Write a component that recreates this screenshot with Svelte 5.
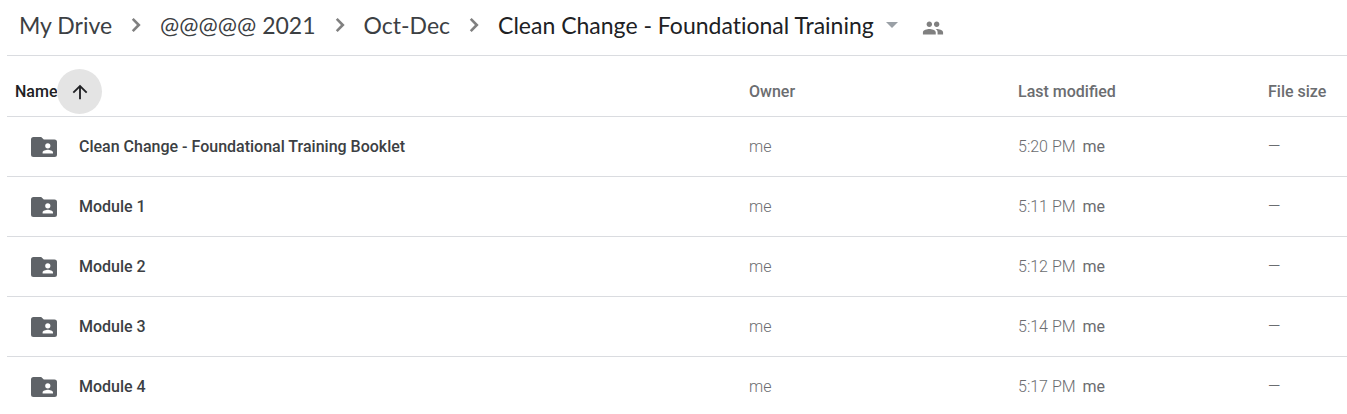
<script>
  const crumbs = ['My Drive', '@@@@@ 2021', 'Oct-Dec'];
  const rows = [
    { name: 'Clean Change - Foundational Training Booklet', time: '5:20 PM' },
    { name: 'Module 1', time: '5:11 PM' },
    { name: 'Module 2', time: '5:12 PM' },
    { name: 'Module 3', time: '5:14 PM' },
    { name: 'Module 4', time: '5:17 PM' }
  ];
</script>

<main>
  <nav aria-label="Breadcrumb">
    {#each crumbs as crumb}
      <a href="#folder">{crumb}</a>
      <svg class="chevron" viewBox="0 0 24 24" aria-hidden="true"><path d="M10 6 8.4 7.6 12.8 12l-4.4 4.4L10 18l6-6z" /></svg>
    {/each}
    <button class="current">
      Clean Change - Foundational Training
      <svg class="caret" viewBox="0 0 12 6" aria-hidden="true"><path d="M0 0h12L6 6z" /></svg>
    </button>
    <button class="share" aria-label="Manage people">
      <svg viewBox="0 0 24 24" aria-hidden="true"><path d="M16 11c1.66 0 2.99-1.34 2.99-3S17.66 5 16 5s-3 1.34-3 3 1.34 3 3 3zm-8 0c1.66 0 2.99-1.34 2.99-3S9.66 5 8 5 5 6.34 5 8s1.34 3 3 3zm0 2c-2.33 0-7 1.17-7 3.5V19h14v-2.5c0-2.33-4.67-3.5-7-3.5zm8 0c-.29 0-.62.02-.97.05 1.16.84 1.97 1.97 1.97 3.45V19h6v-2.5c0-2.33-4.67-3.5-7-3.5z" /></svg>
    </button>
  </nav>

  <table>
    <colgroup><col /><col class="c-owner" /><col class="c-modified" /><col class="c-size" /></colgroup>
    <thead>
      <tr>
        <th>
          <div class="sort">
            Name
            <button aria-label="Reverse sort direction">
              <svg viewBox="0 0 24 24" aria-hidden="true"><path d="m4 12 1.41 1.41L11 7.83V20h2V7.83l5.58 5.59L20 12l-8-8z" /></svg>
            </button>
          </div>
        </th>
        <th>Owner</th>
        <th>Last modified</th>
        <th>File size</th>
      </tr>
    </thead>
    <tbody>
      {#each rows as row}
        <tr>
          <td>
            <div class="item">
              <svg viewBox="0 0 26 20" aria-hidden="true"><path fill-rule="evenodd" d="M2.5 0h7.7l2.6 2.4h10.7A2.5 2.5 0 0 1 26 4.900v12.600a2.500 2.500 0 0 1-2.500 2.500h-21A2.500 2.500 0 0 1 0 17.500v-15A2.500 2.500 0 0 1 2.500 0zM16.800 6.200a2.600 2.600 0 1 0 0 5.200 2.600 2.600 0 0 0 0-5.200zM11.600 16.600H22v-1.200c0-1.800-3.400-2.700-5.200-2.700s-5.200.9-5.200 2.700z" /></svg>
              <span>{row.name}</span>
            </div>
          </td>
          <td>me</td>
          <td>{row.time} <span class="by">me</span></td>
          <td>—</td>
        </tr>
      {/each}
    </tbody>
  </table>
</main>

<style>
  :global(body) {
    background: #fff;
    overflow: hidden;
  }
  main {
    padding-left: 7px;
    font-family: Roboto, sans-serif;
    color: #6b6d70;
  }
  nav {
    display: flex;
    align-items: center;
    height: 56px;
    padding: 0 12px 5px;
    box-sizing: border-box;
    border-bottom: 1px solid #dadce0;
    color: #3c4043;
    font-family: Lato, Roboto, sans-serif;
    font-size: 23px;
    font-variant-ligatures: none;
    line-height: 32px;
    white-space: nowrap;
  }
  a {
    color: inherit;
    text-decoration: none;
  }
  button {
    border: 0;
    padding: 0;
    background: none;
    color: inherit;
    font: inherit;
    cursor: pointer;
  }
  svg {
    display: block;
    flex: none;
    fill: currentColor;
  }
  .chevron {
    width: 28px;
    height: 28px;
    margin: 0 10px;
    color: #808080;
  }
  .current {
    display: flex;
    align-items: center;
    gap: 12px;
    color: #202124;
    font-variant-ligatures: none;
  }
  .caret {
    width: 12px;
    height: 6px;
    color: #9aa0a6;
  }
  .share {
    margin: 5px 0 0 24px;
    color: #808080;
  }
  .share svg {
    width: 22px;
    height: 22px;
  }
  table {
    width: 100%;
    table-layout: fixed;
    border-collapse: collapse;
    font-size: 16px;
    line-height: 20px;
  }
  .c-owner {
    width: 269px;
  }
  .c-modified {
    width: 250px;
  }
  .c-size {
    width: 79px;
  }
  th,
  td {
    box-sizing: border-box;
    height: 60px;
    padding: 0;
    border-bottom: 1px solid #dadce0;
    text-align: left;
    white-space: nowrap;
  }
  th {
    padding-top: 12px;
    font-weight: 500;
  }
  td {
    padding-top: 2px;
    font-weight: 300;
  }
  .sort {
    display: flex;
    align-items: center;
    height: 20px;
    padding-left: 8px;
    color: #202124;
  }
  .sort button {
    display: grid;
    place-items: center;
    width: 45px;
    height: 45px;
    border-radius: 50%;
    background: #e4e4e4;
  }
  .sort svg {
    width: 22px;
    height: 22px;
  }
  .item {
    display: flex;
    align-items: center;
    gap: 22px;
    padding-left: 24px;
    color: #3c4043;
    font-weight: 500;
  }
  .item svg {
    width: 26px;
    height: 20px;
    color: #5f6368;
  }
  .by {
    margin-left: 3px;
    font-weight: 400;
  }
</style>
